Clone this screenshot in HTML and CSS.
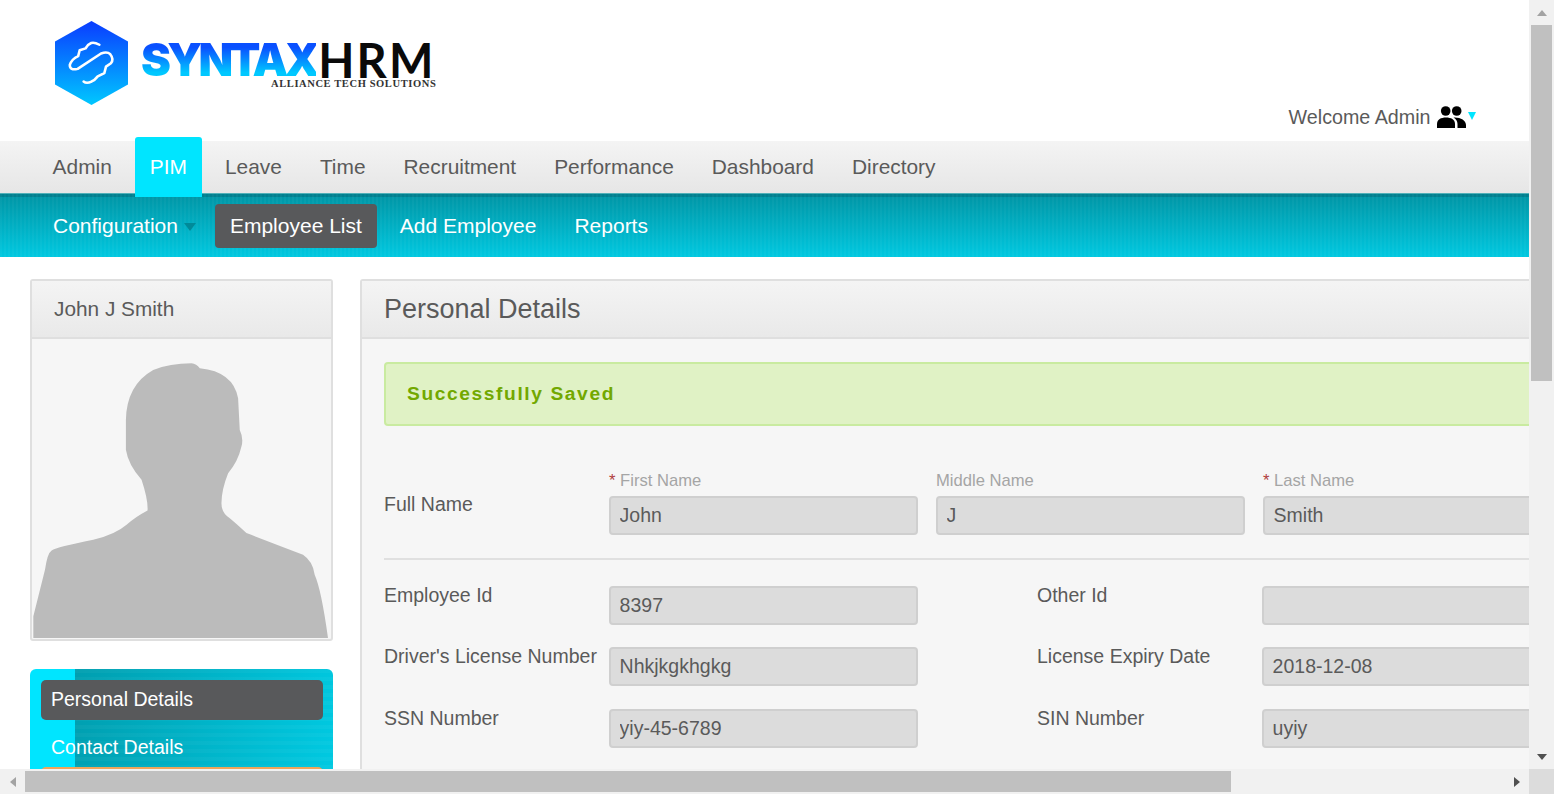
FILE: index.html
```html
<!DOCTYPE html>
<html lang="en">
<head>
  <meta charset="UTF-8">
  <title>SyntaxHRM - Personal Details</title>
  <link rel="stylesheet" href="styles.css">
</head>
<body>
<div class="window">
  <div class="viewport">
    <header class="top">
      <div class="logo">
        <svg class="logo-mark" viewBox="0 0 74 86" width="73" height="84" preserveAspectRatio="none">
          <defs>
            <linearGradient id="hex" x1="0" y1="0" x2="0" y2="1">
              <stop offset="0" stop-color="#0a3cff"/>
              <stop offset="1" stop-color="#00c8ff"/>
            </linearGradient>
          </defs>
          <path d="M37 0 L74 21 V65 L37 86 L0 65 V21 Z" fill="url(#hex)"/>
          <path d="M45 24.3 Q40 21.5 36.7 22.5 Q33 24 31 28 L25 30 L23.5 36 Q17 39 15 45 Q15 51 23 49 L46.7 33.3 Q53 31 56 34 Q60 39 56.7 43.3 L51.7 46.7 L50 53.3 L43.3 56.7 Q40 61 37 62 Q32 64.5 29 62" fill="none" stroke="#fff" stroke-width="2.6" stroke-linecap="round" stroke-linejoin="round"/>
        </svg>
        <div class="wordmark">
          <div class="wordmark-name"><span class="wordmark-syntax">SYNTAX</span><span class="wordmark-hrm">HRM</span></div>
          <div class="wordmark-sub">ALLIANCE TECH SOLUTIONS</div>
        </div>
      </div>
      <div class="welcome">
        <span>Welcome Admin</span>
        <svg class="welcome-icon" viewBox="0 0 29 22" width="29" height="22">
          <circle cx="8.7" cy="5" r="4.8"/>
          <circle cx="19.7" cy="5" r="4.8"/>
          <path d="M0 22 V18 C0 13.5 4 11.5 9 11.5 C14 11.5 18 13.5 18 18 V22 Z"/>
          <path d="M16.5 11.5 C23 11 29 14 29 19 V22 H20.5 V18 C20.5 15 19 13 16.5 11.5 Z"/>
        </svg>
        <span class="welcome-arrow"></span>
      </div>
    </header>

    <nav class="mainnav">
      <a>Admin</a>
      <a class="active">PIM</a>
      <a>Leave</a>
      <a>Time</a>
      <a>Recruitment</a>
      <a>Performance</a>
      <a>Dashboard</a>
      <a>Directory</a>
    </nav>

    <nav class="subnav">
      <a class="has-arrow">Configuration<span class="subnav-arrow"></span></a>
      <a class="active">Employee List</a>
      <a>Add Employee</a>
      <a>Reports</a>
    </nav>

    <main class="layout">
      <aside class="side">
        <section class="panel photo">
          <h2 class="panel-title small">John J Smith</h2>
          <svg class="silhouette" viewBox="36 207 898 900">
            <path d="M40 1105 L40 1040 L75 900 Q82 850 95 842 Q110 832 220 810 Q285 795 320 765 Q345 742 383 722 Q385 690 365 630 Q325 585 318 540 L318 450 Q320 345 400 300 Q450 280 515 280 Q530 282 540 295 Q640 305 655 385 L660 480 Q672 505 665 530 Q655 575 625 610 Q605 660 605 700 Q605 730 630 745 Q660 770 680 790 Q770 825 850 855 Q880 875 885 915 Q905 960 925 1105 Z" fill="#bbbbbb"/>
          </svg>
        </section>
        <ul class="sidemenu">
          <li class="active">Personal Details</li>
          <li class="tight">Contact Details</li>
          <li class="orange"></li>
        </ul>
      </aside>

      <section class="panel details">
        <h1 class="panel-title">Personal Details</h1>
        <div class="panel-body">
          <div class="alert">Successfully Saved</div>

          <div class="name-row">
            <div class="row-label">Full Name</div>
            <div class="field">
              <label><em>*</em> First Name</label>
              <input class="input" value="John" disabled>
            </div>
            <div class="field">
              <label>Middle Name</label>
              <input class="input" value="J" disabled>
            </div>
            <div class="field">
              <label><em>*</em> Last Name</label>
              <input class="input" value="Smith" disabled>
            </div>
          </div>

          <div class="form-grid">
            <div class="form-label">Employee Id</div>
            <input class="input" value="8397" disabled>
            <div class="form-label second">Other Id</div>
            <input class="input" value="" disabled>

            <div class="form-label">Driver's License Number</div>
            <input class="input" value="Nhkjkgkhgkg" disabled>
            <div class="form-label second">License Expiry Date</div>
            <input class="input" value="2018-12-08" disabled>

            <div class="form-label">SSN Number</div>
            <input class="input" value="yiy-45-6789" disabled>
            <div class="form-label second">SIN Number</div>
            <input class="input" value="uyiy" disabled>
          </div>
        </div>
      </section>
    </main>
  </div>

  <div class="vbar">
    <div class="sb-btn"><span class="arrow up"></span></div>
    <div class="vbar-track"><div class="vbar-thumb"></div></div>
    <div class="sb-btn"><span class="arrow down"></span></div>
  </div>
  <div class="hbar">
    <div class="sb-btn"><span class="arrow left"></span></div>
    <div class="hbar-track"><div class="hbar-thumb"></div></div>
    <div class="sb-btn"><span class="arrow right"></span></div>
  </div>
  <div class="corner"></div>
</div>
</body>
</html>
```

FILE: styles.css
```css
html, body {
  margin: 0;
  height: 100%;
  overflow: hidden;
}
.window {
  display: grid;
  grid-template-columns: 1529px 25px;
  grid-template-rows: 769px 25px;
  width: 1554px;
  height: 794px;
}
.viewport {
  overflow: hidden;
  background: #fff;
  color: #5a5a5a;
  font-family: "Liberation Sans", Arial, sans-serif;
  font-size: 19.5px;
}

/* scrollbars */
.vbar, .hbar {
  display: flex;
  background: #f1f1f1;
}
.vbar {
  flex-direction: column;
}
.sb-btn {
  flex: none;
  width: 25px;
  height: 25px;
  display: flex;
  align-items: center;
  justify-content: center;
}
.vbar-track, .hbar-track {
  flex: 1;
}
.vbar-thumb {
  width: 21px;
  height: 356px;
  margin-left: 2px;
  background: #c0c0c0;
}
.hbar-thumb {
  width: 1206px;
  height: 21px;
  margin-top: 2px;
  background: #c0c0c0;
}
.corner {
  background: #dcdcdc;
}
.arrow {
  border: 0 solid transparent;
}
.arrow.up {
  border-width: 0 5.5px 6px;
  border-bottom-color: #a3a3a3;
}
.arrow.down {
  border-width: 6px 5.5px 0;
  border-top-color: #505050;
}
.arrow.left {
  border-width: 5.5px 6px 5.5px 0;
  border-right-color: #a3a3a3;
}
.arrow.right {
  border-width: 5.5px 0 5.5px 6px;
  border-left-color: #505050;
}

.top {
  height: 141px;
  display: flex;
  justify-content: space-between;
}
.logo {
  display: flex;
  padding: 21px 0 0 55px;
}
.logo-mark {
  flex: none;
}
.wordmark {
  margin: 21px 0 0 13px;
}
.wordmark-name {
  display: flex;
  height: 36px;
  line-height: 36px;
  font-family: Inter, sans-serif;
  font-size: 45px;
}
.wordmark-syntax {
  font-weight: 900;
  letter-spacing: -3.7px;
  background: linear-gradient(#0a50ff 15%, #00c8ff 85%);
  -webkit-background-clip: text;
  background-clip: text;
  color: transparent;
}
.wordmark-hrm {
  margin-left: 2px;
  color: #0a0a0a;
  font-family: Lato, sans-serif;
  font-size: 47px;
  font-weight: 700;
  letter-spacing: 2.2px;
}
.wordmark-sub {
  padding-left: 130px;
  font-family: "Liberation Serif", serif;
  font-size: 10.5px;
  line-height: 12px;
  font-weight: 700;
  letter-spacing: 0.6px;
  color: #333;
  white-space: nowrap;
}
.welcome {
  display: flex;
  align-items: center;
  align-self: flex-end;
  height: 22px;
  margin: 0 53px 13px 0;
  font-size: 19.7px;
}
.welcome-icon {
  margin: 0 1px 0 6px;
}
.welcome-arrow {
  margin: -3px 0 0 1.5px;
  border: 4.5px solid transparent;
  border-top: 8px solid #00e5ff;
  border-bottom: 0;
}

.mainnav {
  height: 52px;
  box-sizing: border-box;
  display: flex;
  gap: 8px;
  padding-left: 37.6px;
  background: linear-gradient(#f4f4f4, #e6e6e6);
  font-size: 20.9px;
}
.mainnav a {
  padding: 0 15px;
  line-height: 52px;
  border-radius: 3px 3px 0 0;
}
.mainnav a.active {
  height: 60px;
  margin-top: -4px;
  line-height: 60px;
  background: #00e5ff;
  color: #fff;
  position: relative;
}

.subnav {
  height: 64px;
  box-sizing: border-box;
  display: flex;
  align-items: center;
  gap: 8px;
  padding: 0 0 0 38px;
  border-top: 1px solid #4fb0b8;
  background:
    repeating-linear-gradient(90deg, rgba(255,255,255,0.03) 0 2px, transparent 2px 4px),
    linear-gradient(#00808f 0 3px, #0097a7 3px, #00c8e0);
  color: #fff;
  font-size: 21px;
}
.subnav a {
  display: flex;
  align-items: center;
  height: 44px;
  padding: 0 15px;
  border-radius: 4px;
}
.subnav a.has-arrow {
  padding-right: 11px;
}
.subnav a.active {
  background: #58595b;
}
.subnav-arrow {
  margin: 2px 0 0 6px;
  border: 6px solid transparent;
  border-top: 8px solid #008a99;
  border-bottom: 0;
}

.layout {
  display: flex;
  align-items: flex-start;
  gap: 27px;
  padding: 22px 0 0 30px;
}
.side {
  flex: none;
  width: 303px;
}
.panel {
  border: 2px solid #dfdfdf;
  border-radius: 3px;
  background: #f6f6f6;
  box-sizing: border-box;
}
.panel-title {
  margin: 0;
  height: 56px;
  padding-left: 22px;
  line-height: 57px;
  border-bottom: 2px solid #dfdfdf;
  background: linear-gradient(#f4f4f4, #e9e9e9);
  font-size: 27px;
  font-weight: 400;
}
.panel-title.small {
  line-height: 55px;
  font-size: 20.8px;
}
.silhouette {
  display: block;
  width: 100%;
}

.sidemenu {
  list-style: none;
  margin: 28px 0 0;
  padding: 11px 10px 11px 11px;
  border-radius: 6px;
  background:
    linear-gradient(90deg, #00e5ff 45px, transparent 45px),
    repeating-linear-gradient(0deg, rgba(255,255,255,0.03) 0 4px, transparent 4px 8px),
    linear-gradient(100deg, #0097a7, #00c8e0 95%);
  color: #fff;
}
.sidemenu li {
  height: 40px;
  line-height: 39px;
  margin-bottom: 7px;
  padding-left: 10px;
  border-radius: 5px;
}
.sidemenu li.tight {
  margin-bottom: 0;
  line-height: 41px;
}
.sidemenu li.active {
  background: #58595b;
}
.sidemenu li.orange {
  background: #f0a55a;
}

.details {
  flex: none;
  width: 1486px;
  min-height: 600px;
}
.panel-body {
  padding: 23px 22px;
}
.alert {
  height: 64px;
  box-sizing: border-box;
  padding-left: 21px;
  line-height: 59px;
  border: 2px solid #c9eba0;
  border-radius: 4px;
  background: #e0f2c5;
  color: #72a800;
  font-size: 19.2px;
  font-weight: 700;
  letter-spacing: 1.6px;
}

.name-row {
  display: grid;
  grid-template-columns: 225px 327px 327px 309px;
  align-items: center;
  margin-top: 44px;
  padding-bottom: 23px;
  border-bottom: 2px solid #e0e0e0;
}
.row-label {
  margin-top: 4px;
}
.field label {
  display: block;
  height: 26px;
  line-height: 22px;
  font-size: 16.6px;
  color: #a5a5a5;
}
.field label em {
  font-style: normal;
  color: #b04040;
}
.field .input {
  width: 309px;
}
.input {
  display: block;
  width: 100%;
  height: 39px;
  box-sizing: border-box;
  padding: 0 8.6px;
  border: 2px solid #cfcfcf;
  border-radius: 4px;
  background: #dcdcdc;
  color: #5a5a5a;
  -webkit-text-fill-color: #5a5a5a;
  opacity: 1;
  font-family: inherit;
  font-size: 19.5px;
}

.form-grid {
  display: grid;
  grid-template-columns: 225px 309px 344px 309px;
  grid-template-rows: 39px 40px 39px;
  row-gap: 22px;
  margin-top: 26px;
}
.form-label {
  line-height: 18px;
  white-space: nowrap;
}
.form-label.second {
  margin-left: 119px;
}
```
